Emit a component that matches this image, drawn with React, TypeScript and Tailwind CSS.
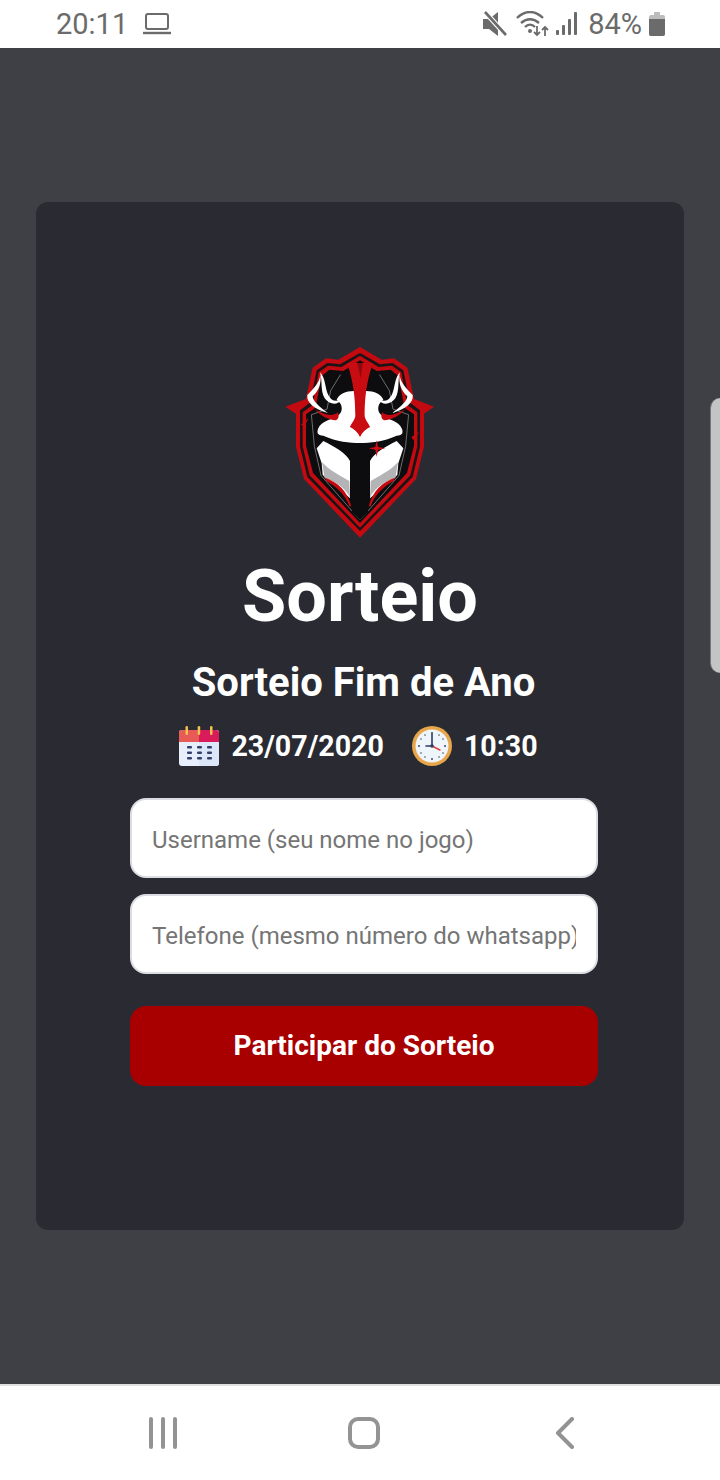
const StatusIcons = () => (
  <div className="flex items-center text-[#6b6b6b]">
    {/* muted speaker */}
    <svg width="24" height="26" viewBox="0 0 24 26" className="mr-[9px]">
      <path d="M0 8h6l9-7v24l-9-7H0z" fill="#6b6b6b" />
      <path d="M2 1l21 23" stroke="#fff" strokeWidth="5" />
      <path d="M2 1l21 23" stroke="#6b6b6b" strokeWidth="2.6" />
    </svg>
    {/* wifi with arrows */}
    <svg width="34" height="26" viewBox="0 0 34 26" fill="none" stroke="#6b6b6b" className="mr-[6px]">
      <path d="M1 7C9-1 19-1 27 7" strokeWidth="2.4" />
      <path d="M5 12c6-5 12-5 18 0" strokeWidth="2.4" />
      <path d="M9 16c3-3 7-3 10 0" strokeWidth="2.4" />
      <circle cx="14" cy="20" r="2" fill="#6b6b6b" stroke="none" />
      <path d="M21 15v9M18 21l3 3 3-3M29 25v-9M26 19l3-3 3 3" strokeWidth="1.8" />
    </svg>
    {/* signal bars */}
    <svg width="21" height="24" viewBox="0 0 21 24" fill="#6b6b6b" className="mr-[11px]">
      <rect x="0" y="18" width="3" height="5" rx="1" />
      <rect x="6" y="13" width="3" height="10" rx="1" />
      <rect x="12" y="7" width="3" height="16" rx="1" />
      <rect x="18" y="0" width="3" height="23" rx="1" />
    </svg>
    <span className="text-[29px] leading-none">84%</span>
    {/* battery */}
    <svg width="16" height="24" viewBox="0 0 16 24" className="ml-[7px]">
      <path d="M5 0h6v3h3a2 2 0 0 1 2 2v17a2 2 0 0 1-2 2H2a2 2 0 0 1-2-2V5a2 2 0 0 1 2-2h3z" fill="#bdbdbd" />
      <path d="M0 7h16v15a2 2 0 0 1-2 2H2a2 2 0 0 1-2-2z" fill="#6b6b6b" />
    </svg>
  </div>
);

// one side of the helmet, mirrored for the other
const LogoHalf = () => (
  <g>
    {/* horn: white outline on the black interior */}
    <path d="M150 112 C154 138 134 158 112 180 C108 202 134 224 174 234 C148 216 128 198 128 184 C146 168 156 146 150 112 Z" fill="#fff" />
    <path d="M150 112 C168 130 164 162 176 182 C184 196 196 202 216 192 C202 214 178 208 164 190 C150 166 158 136 150 112 Z" fill="#fff" />
    {/* dome */}
    <path d="M270 170 C238 164 208 174 200 194 C216 204 222 226 206 240 C188 254 154 256 144 282 C139 296 146 302 160 302 C200 320 240 324 270 324 Z" fill="#fff" />
    {/* brow slash */}
    <path d="M134 222 C156 236 184 248 204 232 C208 244 206 252 198 256 C174 254 150 242 134 222 Z" fill="#c30a10" />
    {/* cheek */}
    <path d="M140 340 L160 318 C192 334 226 352 240 378 L240 490 L158 420 L155 385 Z" fill="#fff" />
    <path d="M156 382 C180 408 214 424 238 438 L240 490 C230 462 198 440 164 430 Z" fill="#b4b4b6" />
    <path d="M165 428 C200 440 232 466 244 514 L238 514 C226 478 196 452 168 438 Z" fill="#c30a10" />
  </g>
);

const Logo = () => (
  <svg width="180" height="210" viewBox="0 0 540 630">
    {/* shield */}
    <path
      d="M270 36 L335 74 L372 70 L412 98 L432 192 L492 215 L462 236 L462 335 L438 432 L270 608 L102 432 L78 336 L78 236 L46 215 L108 192 L128 98 L168 70 L205 74 Z"
      fill="#c30a10"
    />
    <path
      d="M270 54 L330 88 L368 84 L400 106 L420 203 L450 226 L450 335 L428 426 L270 588 L112 426 L90 335 L90 226 L120 203 L140 106 L172 84 L210 88 Z"
      fill="#1b1416"
    />
    <path
      d="M270 62 L326 96 L366 92 L394 112 L412 210 L442 232 L442 334 L421 421 L270 578 L119 421 L98 334 L98 232 L128 210 L146 112 L174 92 L214 96 Z"
      fill="#c30a10"
    />
    <path
      d="M270 76 L320 108 L362 104 L386 124 L403 218 L432 238 L432 332 L411 414 L270 564 L129 414 L108 332 L108 238 L137 218 L154 124 L178 104 L220 108 Z"
      fill="#0d0d0f"
    />
    <path
      d="M205 108 L172 158 L160 215 L108 232 L118 330 L140 420 L270 558 L400 420 L422 330 L432 232 L380 215 L368 158 L335 108"
      fill="none"
      stroke="#a8a8a8"
      strokeWidth="2"
      transform="translate(27 14) scale(0.9 0.97)"
    />
    <LogoHalf />
    <g transform="translate(540 0) scale(-1 1)">
      <LogoHalf />
    </g>
    {/* nose guard */}
    <path d="M246 324 H294 V530 L270 556 L246 530 Z" fill="#0d0d0f" />
    {/* crest */}
    <path d="M232 84 L308 84 C298 120 284 160 284 244 C288 260 298 268 300 276 C288 282 276 292 270 306 C264 292 252 282 240 276 C242 268 252 260 256 244 C256 160 242 120 232 84 Z" fill="#c90b12" />
    <path d="M262 84 L278 84 L272 130 Z" fill="#8e0a0e" />
    {/* star and sparks */}
    <path d="M320 316 L324 336 L346 340 L324 344 L320 366 L316 344 L296 340 L316 336 Z" fill="#d30d14" />
    <path d="M92 270 L116 250 L104 272 Z" fill="#c30a10" />
    <path d="M448 290 L424 306 L430 316 Z" fill="#c30a10" />
  </svg>
);

const CalendarIcon = () => (
  <svg width="40" height="40" viewBox="0 0 40 40">
    <rect x="0" y="4" width="40" height="36" rx="3" fill="#e8effc" />
    <path d="M20 4h17a3 3 0 0 1 3 3v30a3 3 0 0 1-3 3H20z" fill="#dbe6f9" />
    <path d="M3 4h17v12H0V7a3 3 0 0 1 3-3z" fill="#e75a55" />
    <path d="M20 4h17a3 3 0 0 1 3 3v9H20z" fill="#d91b5c" />
    <rect x="6.5" y="0" width="2.5" height="9" rx="1.25" fill="#f2c14e" />
    <rect x="18.7" y="0" width="2.5" height="9" rx="1.25" fill="#f2c14e" />
    <rect x="31" y="0" width="2.5" height="9" rx="1.25" fill="#f2c14e" />
    <g fill="#34406b">
      <rect x="8" y="20" width="5" height="2.6" rx="1" /><rect x="18" y="20" width="5" height="2.6" rx="1" /><rect x="28" y="20" width="5" height="2.6" rx="1" />
      <rect x="8" y="25.5" width="5" height="2.6" rx="1" /><rect x="18" y="25.5" width="5" height="2.6" rx="1" /><rect x="28" y="25.5" width="5" height="2.6" rx="1" />
      <rect x="8" y="31" width="5" height="2.6" rx="1" /><rect x="18" y="31" width="5" height="2.6" rx="1" /><rect x="28" y="31" width="5" height="2.6" rx="1" />
    </g>
  </svg>
);

const ClockIcon = () => (
  <svg width="40" height="40" viewBox="0 0 40 40">
    <circle cx="20" cy="20" r="20" fill="#e8a64a" />
    <circle cx="20" cy="20" r="16.5" fill="#eef5fb" />
    <g fill="#3b4a6b">
      <circle cx="20" cy="7" r="1" /><circle cx="20" cy="33" r="1" /><circle cx="7" cy="20" r="1" /><circle cx="33" cy="20" r="1" />
      <circle cx="27" cy="9" r=".8" /><circle cx="13" cy="9" r=".8" /><circle cx="27" cy="31" r=".8" /><circle cx="13" cy="31" r=".8" />
      <circle cx="31" cy="13" r=".8" /><circle cx="9" cy="13" r=".8" /><circle cx="31" cy="27" r=".8" /><circle cx="9" cy="27" r=".8" />
    </g>
    <path d="M20 20V8M20 20h-6" stroke="#2f3d63" strokeWidth="1.6" strokeLinecap="round" />
    <path d="M20 20l8 4" stroke="#e0413c" strokeWidth="1.4" strokeLinecap="round" />
    <circle cx="20" cy="20" r="1.8" fill="#2f3d63" />
  </svg>
);

export default function App() {
  return (
    <div className="relative flex h-[1480px] w-[720px] flex-col overflow-hidden bg-white font-['Roboto',sans-serif]">
      <header className="flex h-12 shrink-0 items-center justify-between pl-14 pr-[55px] text-[#6b6b6b]">
        <div className="flex items-center gap-[15px]">
          <span className="text-[29px] leading-none">20:11</span>
          <svg width="28" height="22" viewBox="0 0 28 22" fill="none">
            <rect x="3" y="1" width="22" height="15" rx="2" stroke="#6b6b6b" strokeWidth="2" />
            <path d="M0 20h28" stroke="#6b6b6b" strokeWidth="2.4" />
          </svg>
        </div>
        <StatusIcons />
      </header>

      <main className="flex flex-1 items-center justify-center bg-[#3f4045]">
        <section className="flex h-[1028px] w-[648px] flex-col items-center rounded-xl bg-[#2a2b32] pt-[133px]">
          <Logo />
          <h1 className="mt-[2px] text-[72px] font-bold leading-[100px] text-white">Sorteio</h1>
          <h2 className="ml-[7px] mt-[12px] text-[40px] font-bold leading-[48px] text-white">Sorteio Fim de Ano</h2>
          <div className="mr-[3px] mt-[19px] flex h-10 items-center text-[28.6px] font-bold text-white">
            <CalendarIcon />
            <span className="ml-[12px]">23/07/2020</span>
            <span className="ml-[28px]"><ClockIcon /></span>
            <span className="ml-[12px]">10:30</span>
          </div>
          <form className="ml-2 mt-[32px] flex w-[468px] flex-col">
            <input
              placeholder="Username (seu nome no jogo)"
              className="h-20 rounded-2xl border-2 border-[#dcdde2] bg-white px-5 pt-1 text-2xl outline-none placeholder:text-[#757575]"
            />
            <input
              placeholder="Telefone (mesmo número do whatsapp)"
              className="mt-4 h-20 rounded-2xl border-2 border-[#dcdde2] bg-white px-5 pt-1 text-2xl outline-none placeholder:text-[#757575]"
            />
            <button type="button" className="mt-8 h-20 rounded-2xl bg-[#a80000] text-[28px] font-bold text-white">
              Participar do Sorteio
            </button>
          </form>
        </section>
      </main>

      {/* edge panel handle */}
      <div className="absolute right-0 top-[398px] h-[275px] w-[10px] rounded-l-xl border-l border-[#77777a] bg-[#c4c4c4]" />

      <nav className="flex h-24 shrink-0 items-center justify-center border-t-2 border-[#dfe0e2] bg-white pl-2">
        <div className="flex w-[201px] justify-center">
          <svg width="30" height="32" viewBox="0 0 30 32" stroke="#939393" strokeWidth="4" strokeLinecap="round">
            <path d="M3 2v28M15 2v28M27 2v28" />
          </svg>
        </div>
        <div className="flex w-[201px] justify-center">
          <div className="h-8 w-8 rounded-[10px] border-4 border-[#939393]" />
        </div>
        <div className="flex w-[201px] justify-center">
          <svg width="20" height="32" viewBox="0 0 20 32" fill="none" stroke="#939393" strokeWidth="4" strokeLinecap="round" strokeLinejoin="round">
            <path d="M17 2L3 16l14 14" />
          </svg>
        </div>
      </nav>
    </div>
  );
}
